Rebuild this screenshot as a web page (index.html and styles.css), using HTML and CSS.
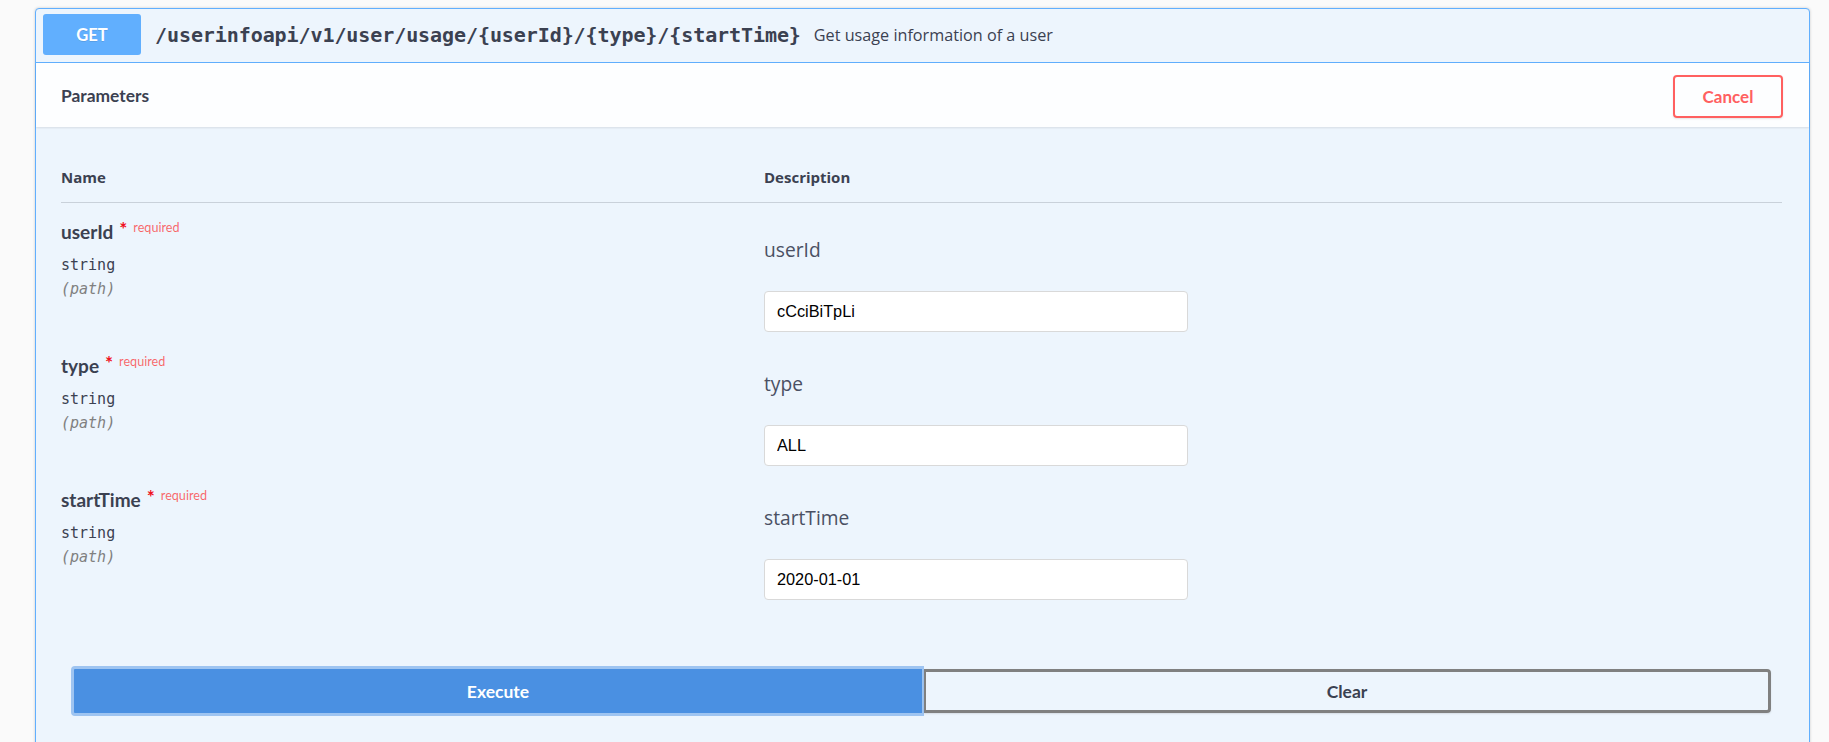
FILE: index.html
```html
<!DOCTYPE html>
<html>
<head>
<meta charset="utf-8">
<link rel="stylesheet" href="styles.css">
</head>
<body>
<div class="opblock">
  <div class="summary">
    <span class="method">GET</span>
    <span class="path">/userinfoapi/v1/user/usage/{userId}/{type}/{startTime}</span>
    <span class="summary-desc">Get usage information of a user</span>
  </div>
  <div class="section-header">
    <h4 class="section-title">Parameters</h4>
    <button class="btn-cancel">Cancel</button>
  </div>
  <div class="table-container">
    <div class="thead">
      <div class="th">Name</div>
      <div class="th">Description</div>
    </div>
    <div class="param-row">
      <div class="param-col-name">
        <div class="param-name">userId<span class="star">*</span><span class="req">required</span></div>
        <div class="param-type">string</div>
        <div class="param-in">(path)</div>
      </div>
      <div class="param-col-desc">
        <div class="param-desc">userId</div>
        <input class="param-input" type="text" value="cCciBiTpLi">
      </div>
    </div>
    <div class="param-row">
      <div class="param-col-name">
        <div class="param-name">type<span class="star">*</span><span class="req">required</span></div>
        <div class="param-type">string</div>
        <div class="param-in">(path)</div>
      </div>
      <div class="param-col-desc">
        <div class="param-desc">type</div>
        <input class="param-input" type="text" value="ALL">
      </div>
    </div>
    <div class="param-row">
      <div class="param-col-name">
        <div class="param-name">startTime<span class="star">*</span><span class="req">required</span></div>
        <div class="param-type">string</div>
        <div class="param-in">(path)</div>
      </div>
      <div class="param-col-desc">
        <div class="param-desc">startTime</div>
        <input class="param-input" type="text" value="2020-01-01">
      </div>
    </div>
  </div>
  <div class="btn-group">
    <button class="btn-execute">Execute</button>
    <button class="btn-clear">Clear</button>
  </div>
</div>
</body>
</html>
```
FILE: styles.css
```css
html, body {
  margin: 0;
  padding: 0;
  background: #fafafa;
  height: 742px;
  overflow: hidden;
}
body {
  padding-top: 8px;
  box-sizing: border-box;
  font-family: "Open Sans", sans-serif;
  color: #3b4151;
}
.opblock {
  margin: 0 19px 0 35px;
  border: 1px solid #61affe;
  border-radius: 4px;
  background: #edf5fd;
  box-shadow: 0 0 3px rgba(0,0,0,.19);
  min-height: 760px;
}
.summary {
  display: flex;
  align-items: center;
  padding: 5px 7px 7px 7px;
  border-bottom: 1px solid #61affe;
}
.method {
  width: 98px;
  height: 41px;
  display: flex;
  align-items: center;
  justify-content: center;
  background: #61affe;
  border-radius: 3px;
  color: #fff;
  font-family: "Lato", sans-serif;
  font-weight: 700;
  font-size: 16.5px;
  text-shadow: 0 1px 0 rgba(0,0,0,.1);
}
.path {
  padding: 0 13px 0 14px;
  font-family: "DejaVu Sans Mono", monospace;
  font-weight: 700;
  font-size: 20.05px;
  letter-spacing: -0.1px;
  color: #3b4151;
}
.summary-desc {
  font-family: "Open Sans", sans-serif;
  font-size: 16.2px;
  color: #3b4151;
}
.section-header {
  display: flex;
  align-items: center;
  justify-content: space-between;
  height: 64px;
  padding: 0 26px 0 25px;
  background: rgba(255,255,255,.85);
  box-shadow: 0 1px 2px rgba(0,0,0,.1);
}
.section-title {
  margin: 0;
  font-family: "Lato", sans-serif;
  font-weight: 700;
  font-size: 17.4px;
  color: #3b4151;
}
.btn-cancel {
  width: 110px;
  height: 43px;
  margin-top: 2px;
  background: transparent;
  border: 2px solid #ff6060;
  border-radius: 4px;
  color: #ff6060;
  font-family: "Lato", sans-serif;
  font-weight: 700;
  font-size: 17px;
  box-shadow: 0 1px 2px rgba(0,0,0,.1);
}
.table-container {
  padding: 23px 27px 0 25px;
}
.thead {
  display: grid;
  grid-template-columns: 703px 1fr;
  border-bottom: 1px solid rgba(59,65,81,.2);
}
.th {
  padding: 16px 0 14px;
  line-height: 22px;
  font-family: "Open Sans", sans-serif;
  font-weight: 700;
  font-size: 15px;
  color: #3b4151;
}
.param-row {
  display: grid;
  grid-template-columns: 703px 1fr;
  height: 134px;
}
.param-col-name {
  padding-top: 17px;
}
.param-name {
  line-height: 24px;
  font-family: "Lato", sans-serif;
  font-weight: 700;
  font-size: 19px;
  color: #3b4151;
}
.star {
  position: relative;
  top: -3px;
  padding: 0 6px 0 6px;
  color: #f01020;
  font-size: 19px;
}
.req {
  position: relative;
  top: -7px;
  font-family: "Lato", sans-serif;
  font-weight: 400;
  font-size: 12.6px;
  color: rgba(255,0,0,.6);
}
.param-type {
  margin-top: 8px;
  line-height: 20px;
  font-family: "DejaVu Sans Mono", monospace;
  font-size: 15px;
  color: #3b4151;
}
.param-in {
  margin-top: 4px;
  line-height: 20px;
  font-family: "DejaVu Sans Mono", monospace;
  font-style: italic;
  font-size: 15px;
  color: #808080;
}
.param-col-desc {
  padding-top: 33px;
  display: flex;
  flex-direction: column;
  align-items: flex-start;
}
.param-desc {
  line-height: 28px;
  font-family: "Open Sans", sans-serif;
  font-size: 19.2px;
  color: #4a5063;
}
.param-input {
  margin: 27px 0 0 0;
  width: 424px;
  height: 41px;
  box-sizing: border-box;
  padding: 0 12px;
  border: 1px solid #d9d9d9;
  border-radius: 4px;
  background: #fff;
  font-family: "Liberation Sans", Arial, sans-serif;
  font-size: 16.3px;
  color: #000;
  outline: none;
}
.btn-group {
  display: flex;
  align-items: center;
  padding: 61px 38px 30px 35px;
}
.btn-execute {
  flex: 852 1 0;
  height: 50px;
  background: #4a90e2;
  border: 3px solid #9ec4f1;
  border-right-width: 2px;
  border-radius: 4px 0 0 4px;
  color: #fff;
  font-family: "Lato", sans-serif;
  font-weight: 700;
  font-size: 17.5px;
}
.btn-clear {
  flex: 846 1 0;
  height: 44px;
  background: transparent;
  border: 3px solid #808080;
  border-left-width: 2px;
  border-radius: 0 4px 4px 0;
  color: #3b4151;
  font-family: "Lato", sans-serif;
  font-weight: 700;
  font-size: 17.5px;
  box-shadow: 0 1px 2px rgba(0,0,0,.1);
}
```
